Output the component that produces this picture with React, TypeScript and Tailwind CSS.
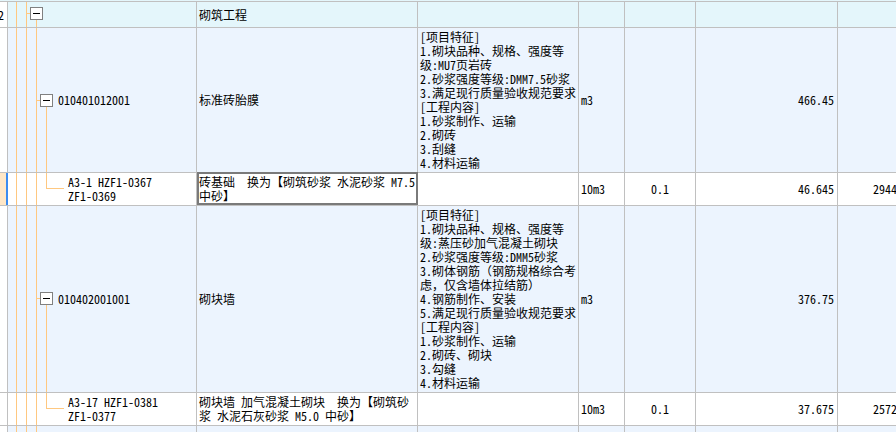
import React from "react"

const TREE = "#ffc880"

type Kind = "section" | "item" | "sub"

type Row = {
  kind: Kind
  h: number
  mark?: number
  code?: string[]
  name?: string[]
  desc?: string[]
  unit?: string
  coef?: string
  qty?: string
  total?: string
  bg: string
  selected?: boolean
  num?: string
}

function V({ x, y1, y2 }: { x: number; y1: number; y2: number }) {
  return <line x1={x + 0.5} y1={y1} x2={x + 0.5} y2={y2} stroke={TREE} strokeWidth={1} />
}

function H({ x1, x2, y }: { x1: number; x2: number; y: number }) {
  return <line x1={x1} y1={y + 0.5} x2={x2} y2={y + 0.5} stroke={TREE} strokeWidth={1} />
}

function Box({ left, top }: { left: number; top: number }) {
  return (
    <g>
      <rect x={left + 0.5} y={top + 0.5} width={12} height={12} fill="#ffffff" stroke="#808080" strokeWidth={1} />
      <line x1={left + 3} y1={top + 6.5} x2={left + 10} y2={top + 6.5} stroke="#000000" strokeWidth={1} />
    </g>
  )
}

function Tree({ kind, h, mark = 0 }: { kind: Kind; h: number; mark?: number }) {
  return (
    <svg className="absolute left-0 top-0" width={189} height={h}>
      <V x={8} y1={0} y2={h} />
      <V x={18} y1={0} y2={h} />
      {kind === "section" && (
        <>
          <H x1={18} x2={22} y={mark + 6} />
          <V x={28} y1={mark + 13} y2={h} />
          <Box left={22} top={mark} />
        </>
      )}
      {kind === "item" && (
        <>
          <V x={28} y1={0} y2={h} />
          <H x1={28} x2={32} y={mark + 6} />
          <V x={38} y1={mark + 13} y2={h} />
          <Box left={32} top={mark} />
        </>
      )}
      {kind === "sub" && (
        <>
          <V x={28} y1={0} y2={h} />
          <V x={38} y1={0} y2={mark + 1} />
          <H x1={38} x2={56} y={mark} />
        </>
      )}
    </svg>
  )
}

function Lines({ lines }: { lines?: string[] }) {
  if (!lines) return null
  return (
    <div className="flex flex-col">
      {lines.map((l, i) => (
        <div key={i} className="whitespace-pre">
          {l}
        </div>
      ))}
    </div>
  )
}

const wallDesc = [
  "[项目特征]",
  "1.砌块品种、规格、强度等",
  "级:蒸压砂加气混凝土砌块",
  "2.砂浆强度等级:DMM5砂浆",
  "3.砌体钢筋（钢筋规格综合考",
  "虑，仅含墙体拉结筋）",
  "4.钢筋制作、安装",
  "5.满足现行质量验收规范要求",
  "[工程内容]",
  "1.砂浆制作、运输",
  "2.砌砖、砌块",
  "3.勾缝",
  "4.材料运输",
]

const rows: Row[] = [
  { kind: "section", h: 25, mark: 5, name: ["砌筑工程"], bg: "bg-[#e4f6fb]", num: "2" },
  {
    kind: "item",
    h: 144,
    mark: 66,
    code: ["010401012001"],
    name: ["标准砖胎膜"],
    desc: [
      "[项目特征]",
      "1.砌块品种、规格、强度等",
      "级:MU7页岩砖",
      "2.砂浆强度等级:DMM7.5砂浆",
      "3.满足现行质量验收规范要求",
      "[工程内容]",
      "1.砂浆制作、运输",
      "2.砌砖",
      "3.刮缝",
      "4.材料运输",
    ],
    unit: "m3",
    qty: "466.45",
    bg: "bg-[#ecf4fe]",
  },
  {
    kind: "sub",
    h: 32,
    mark: 15,
    code: ["A3-1 HZF1-0367", "ZF1-0369"],
    name: ["砖基础  换为【砌筑砂浆 水泥砂浆 M7.5", "中砂】"],
    unit: "10m3",
    coef: "0.1",
    qty: "46.645",
    total: "29441.67",
    bg: "bg-white",
    selected: true,
  },
  {
    kind: "item",
    h: 186,
    mark: 86,
    code: ["010402001001"],
    name: ["砌块墙"],
    desc: wallDesc,
    unit: "m3",
    qty: "376.75",
    bg: "bg-[#ecf4fe]",
  },
  {
    kind: "sub",
    h: 32,
    mark: 15,
    code: ["A3-17 HZF1-0381", "ZF1-0377"],
    name: ["砌块墙 加气混凝土砌块  换为【砌筑砂", "浆 水泥石灰砂浆 M5.0 中砂】"],
    unit: "10m3",
    coef: "0.1",
    qty: "37.675",
    total: "25726.12",
    bg: "bg-white",
  },
  {
    kind: "item",
    h: 192,
    mark: 89,
    code: ["010402001002"],
    name: ["砌块墙"],
    desc: wallDesc,
    unit: "m3",
    qty: "120.30",
    bg: "bg-[#ecf4fe]",
  },
]

function TableRow({ r }: { r: Row }) {
  const isSub = r.kind === "sub"
  return (
    <div className={`flex shrink-0 border-b border-[#c0c0c0] ${r.bg}`} style={{ height: r.h + 1 }}>
      {isSub && r.selected ? (
        <div className="w-[8px] shrink-0 border-r-2 border-[#3c8cf0] bg-[#ffe7c7]" />
      ) : (
        <div className="flex w-[8px] shrink-0 items-center overflow-hidden border-r border-[#c0c0c0] bg-white">
          {r.num && <span className="ml-[-2px]">{r.num}</span>}
        </div>
      )}
      <div
        className={`relative flex w-[189px] shrink-0 items-center border-r border-[#c0c0c0] ${
          isSub ? "pl-[60px]" : "pl-[50px]"
        }`}
      >
        <Tree kind={r.kind} h={r.h} mark={r.mark} />
        <div className="relative">
          <Lines lines={r.code} />
        </div>
      </div>
      <div className="relative flex w-[221px] shrink-0 items-center border-r border-[#c0c0c0] pl-[2px]">
        <Lines lines={r.name} />
        {r.selected && (
          <div className="absolute bottom-0 left-0 right-[-1px] top-[-1px] border-2 border-[#7a7a7a]" />
        )}
      </div>
      <div className="flex w-[161px] shrink-0 items-center overflow-hidden border-r border-[#c0c0c0] pl-[2px]">
        <Lines lines={r.desc} />
      </div>
      <div className="flex w-[46px] shrink-0 items-center border-r border-[#c0c0c0] pl-[2px]">{r.unit}</div>
      <div className="flex w-[71px] shrink-0 items-center justify-center border-r border-[#c0c0c0]">{r.coef}</div>
      <div className="flex w-[142px] shrink-0 items-center justify-end border-r border-[#c0c0c0] pr-[3px]">
        {r.qty}
      </div>
      <div className="flex w-[87px] shrink-0 items-center justify-end border-r border-[#c0c0c0] pr-[3px]">
        {r.total}
      </div>
    </div>
  )
}

export default function App() {
  return (
    <div className="h-[432px] w-[896px] overflow-hidden bg-white font-['Noto_Sans_Mono_CJK_SC','Noto_Sans_CJK_SC',monospace] text-[12px] leading-[14px] text-black">
      <div className="h-[1px] bg-[#e4f6fb]" />
      <div className="flex w-[925px] flex-col border-t border-[#c0c0c0]">
        {rows.map((r, i) => (
          <TableRow key={i} r={r} />
        ))}
      </div>
    </div>
  )
}
